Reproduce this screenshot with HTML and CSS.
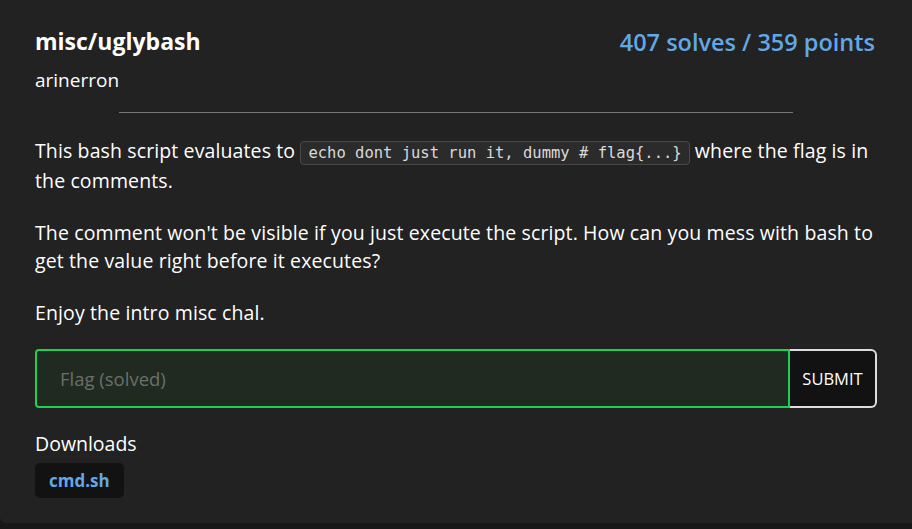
FILE: index.html
```html
<!DOCTYPE html>
<html>
<head>
<meta charset="utf-8">
<link rel="stylesheet" href="styles.css">
</head>
<body>
<div class="card">
  <div class="header">
    <div class="titles">
      <h1 class="title">misc/uglybash</h1>
      <div class="author">arinerron</div>
    </div>
    <div class="stats">407 solves / 359 points</div>
  </div>
  <hr class="divider">
  <div class="desc">
    <p>This bash script evaluates to <code class="code">echo dont just run it, dummy # flag{...}</code> where the flag is in the comments.</p>
    <p>The comment won't be visible if you just execute the script. How can you mess with bash to get the value right before it executes?</p>
    <p>Enjoy the intro misc chal.</p>
  </div>
  <form class="flag-form">
    <input class="flag-input" type="text" placeholder="Flag (solved)">
    <button class="submit" type="button">SUBMIT</button>
  </form>
  <div class="downloads">
    <div class="dl-label">Downloads</div>
    <a class="dl-file">cmd.sh</a>
  </div>
</div>
</body>
</html>
```

FILE: styles.css
```css
html, body {
  margin: 0;
  padding: 0;
  background: #181818;
  height: 529px;
  overflow: hidden;
}
body {
  font-family: "Open Sans", "Noto Sans", sans-serif;
  color: #ffffff;
}
.card {
  background: #222222;
  border-radius: 0 0 0 6px;
  padding: 25px 35px 26px 35px;
  height: 523px;
  box-sizing: border-box;
}
.header {
  display: flex;
  justify-content: space-between;
  align-items: flex-start;
}
.title {
  margin: 0;
  font-size: 23px;
  font-weight: 700;
  line-height: 32px;
}
.author {
  font-size: 19px;
  line-height: 26px;
  margin-top: 10px;
}
.stats {
  font-size: 23.5px;
  line-height: 34px;
  color: #62a8e5;
  font-weight: 600;
  margin-right: 2px;
}
.divider {
  width: 80%;
  border: 0;
  border-top: 1px solid #777;
  margin: 19px auto 0;
}
.desc {
  font-size: 19.5px;
  line-height: 28px;
  letter-spacing: 0.12px;
  margin-top: 24px;
}
.desc p {
  margin: 0 0 24px;
}
.desc p:last-child {
  margin-bottom: 0;
}
.code {
  font-family: "DejaVu Sans Mono", monospace;
  font-size: 15.5px;
  letter-spacing: 0;
  background: #2b2b2b;
  border: 1px solid #484848;
  border-radius: 4px;
  padding: 2px 7px;
  color: #dadada;
}
.flag-form {
  display: flex;
  margin-top: 22px;
  height: 59px;
}
.flag-input {
  flex: 1;
  background: #212a21;
  border: 2px solid #1ccf58;
  border-radius: 4px 0 0 4px;
  padding: 0 23px;
  font-family: inherit;
  font-size: 18.5px;
  color: #fff;
  outline: none;
}
.flag-input::placeholder {
  color: #6b6f6b;
}
.submit {
  background: #121212;
  color: #fff;
  border: 2px solid #dddddd;
  border-left: 0;
  border-radius: 0 6px 6px 0;
  width: 87px;
  font-family: inherit;
  font-size: 16.5px;
  padding: 0;
}
.downloads {
  margin-top: 23px;
}
.dl-label {
  font-size: 19.5px;
  line-height: 26px;
}
.dl-file {
  display: inline-block;
  margin-top: 6px;
  background: #121212;
  color: #62a8e5;
  font-weight: 700;
  font-size: 17px;
  padding: 0 14px;
  line-height: 35px;
  border-radius: 5px;
}
```
